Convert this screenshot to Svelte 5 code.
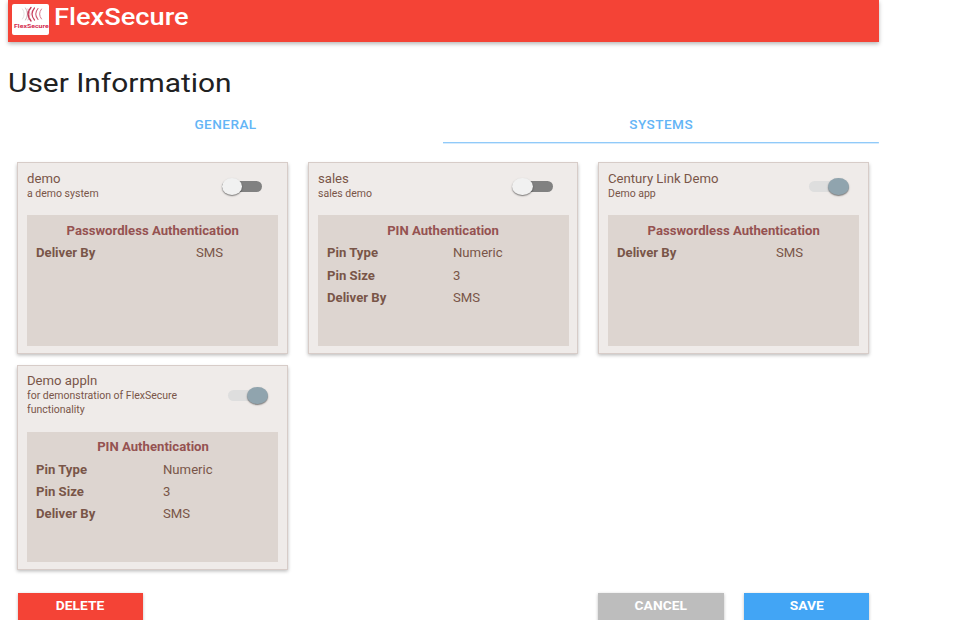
<script>
  const sms = ['Deliver By', 'SMS'];
  const pinRows = [['Pin Type', 'Numeric'], ['Pin Size', '3'], sms];
  const systems = [
    { name: 'demo', about: ['a demo system'], on: false, auth: 'Passwordless Authentication', rows: [sms] },
    { name: 'sales', about: ['sales demo'], on: false, auth: 'PIN Authentication', rows: pinRows },
    { name: 'Century Link Demo', about: ['Demo app'], on: true, auth: 'Passwordless Authentication', rows: [sms] },
    { name: 'Demo appln', about: ['for demonstration of FlexSecure', 'functionality'], on: true, auth: 'PIN Authentication', rows: pinRows }
  ];
</script>

<div class="page">
  <header>
    <svg class="logo" viewBox="0 0 37 31" width="37" height="31">
      <rect width="37" height="31" rx="2" fill="#fff" />
      <g fill="none" stroke-linecap="round">
        <path d="M10.5 5Q14 10 10.5 15" stroke="#ddd" stroke-width=".9" />
        <path d="M13.5 4Q17.5 10 13.5 16" stroke="#c9b5bb" stroke-width="1" />
        <path d="M19 3.5Q13 10 19 17" stroke="#c23a59" stroke-width="1.4" />
        <path d="M16 5Q20 10 16 16" stroke="#d78a9c" stroke-width=".8" />
        <path d="M22.5 4Q17.5 10 22.5 16" stroke="#c9405f" stroke-width="1.2" />
        <path d="M26 4.5Q21.5 10 26 15.5" stroke="#cf5a74" stroke-width="1.1" />
        <path d="M29.5 5Q25.5 10 29.5 15" stroke="#d87b90" stroke-width="1" />
      </g>
      <text x="2" y="23.6" textLength="34.7" lengthAdjust="spacingAndGlyphs" font-size="6.1" font-weight="700" fill="#d42b4f">FlexSecure</text>
    </svg>
    <span class="wide brand">FlexSecure</span>
  </header>

  <h1><span class="wide">User Information</span></h1>

  <nav>
    <div class="tab"><span class="wide">GENERAL</span></div>
    <div class="tab active"><span class="wide">SYSTEMS</span></div>
  </nav>

  <main>
    {#each systems as s}
      <section class="card">
        <div class="head">
          <div class="info">
            <div class="name"><span class="wide">{s.name}</span></div>
            {#each s.about as line}
              <div class="about"><span class="wide">{line}</span></div>
            {/each}
          </div>
          <div class="switch" class:on={s.on}><i class="knob"></i></div>
        </div>
        <div class="panel">
          <div class="auth"><span class="wide">{s.auth}</span></div>
          {#each s.rows as [label, value]}
            <div class="row" class:single={s.rows.length === 1}>
              <b><span class="wide">{label}</span></b>
              <div><span class="wide">{value}</span></div>
            </div>
          {/each}
        </div>
      </section>
    {/each}
  </main>

  <footer>
    <button class="delete"><span class="wide">DELETE</span></button>
    <button class="cancel"><span class="wide">CANCEL</span></button>
    <button class="save"><span class="wide">SAVE</span></button>
  </footer>
</div>

<style>
  :global(body) { background: #fff; overflow: hidden; }
  .page {
    box-sizing: border-box;
    width: 879px;
    height: 620px;
    overflow: visible;
    padding-left: 8px;
    font-family: Roboto, sans-serif;
    color: #795548;
  }
  .wide {
    display: inline-block;
    white-space: nowrap;
    transform: scaleX(1.15);
    transform-origin: left center;
  }
  header {
    display: flex;
    align-items: flex-start;
    height: 41.5px;
    background: #f44336;
    box-shadow: 0 2px 4px rgba(0, 0, 0, .28);
  }
  .logo { flex: none; margin: 4px 4.5px 0 4px; }
  .brand { font-size: 24px; font-weight: 500; line-height: 35px; color: #fff; transform: scaleX(1.135); }
  h1 {
    margin: 24.5px 0 0;
    font-size: 26px;
    font-weight: 400;
    line-height: 34px;
    color: #212121;
  }
  nav { display: flex; margin-top: 8px; height: 35.5px; }
  .tab {
    flex: 1;
    text-align: center;
    font-size: 12px;
    font-weight: 500;
    letter-spacing: .4px;
    line-height: 35px;
    color: #64b5f6;
  }
  .tab .wide { transform: scaleX(1.13); }
  .tab .wide, .auth .wide, button .wide { transform-origin: center; }
  .active { margin-left: -.5px; background: linear-gradient(#90caf9 50%, #d6ebfd 50%) bottom / 100% 2px no-repeat; }
  main {
    display: grid;
    grid-template-columns: repeat(3, 270.6px);
    gap: 11px 19.8px;
    padding: 18.5px 0 0 9.4px;
    align-items: start;
  }
  .card {
    box-sizing: border-box;
    border: 1px solid #d7ccc8;
    background: #efebe9;
    padding: 7.5px 8.5px 7.2px 9.1px;
    box-shadow: 0 1.5px 3.5px rgba(0, 0, 0, .28);
  }
  .head { display: flex; padding-bottom: 15px; }
  .info { flex: 1; }
  .name { font-size: 12px; line-height: 16px; }
  .name .wide, .panel .wide { transform: scaleX(1.095); }
  .about { font-size: 10px; line-height: 13.6px; }
  .about .wide { transform: scaleX(1.05); }
  .switch {
    align-self: center;
    position: relative;
    width: 40px;
    height: 11px;
    margin: 2px 16px 0 0;
    border-radius: 7px;
    background: #818181;
  }
  .knob {
    position: absolute;
    left: -.5px;
    top: -3px;
    width: 20.5px;
    height: 17px;
    border-radius: 50%;
    background: #f1f1f1;
    box-shadow: 0 1px 1.5px rgba(0, 0, 0, .5);
  }
  .on { background: #dedede; margin-right: 10.7px; }
  .on .knob { left: auto; right: 0; background: #90a4ae; }
  .panel { height: 130.6px; background: #ddd5d0; font-size: 12px; line-height: 22.4px; padding: 4.7px 9px 0; box-sizing: border-box; }
  .auth { text-align: center; font-weight: 700; color: #955251; }
  .row { display: grid; grid-template-columns: 126.2px 1fr; }
  .row.single { grid-template-columns: 159.2px 1fr; }
  footer { display: flex; margin: 22.4px 0 0 9.6px; }
  button {
    width: 125.5px;
    height: 30px;
    border: 0;
    padding: 0 0 3px;
    color: #fff;
    font: 700 12px/27px Roboto, sans-serif;
    box-shadow: 0 1px 3px rgba(0, 0, 0, .25);
  }
  .delete { background: #f44336; }
  .cancel { background: #bdbdbd; margin-left: 455px; }
  .save { background: #42a5f5; margin-left: 20px; }
</style>
